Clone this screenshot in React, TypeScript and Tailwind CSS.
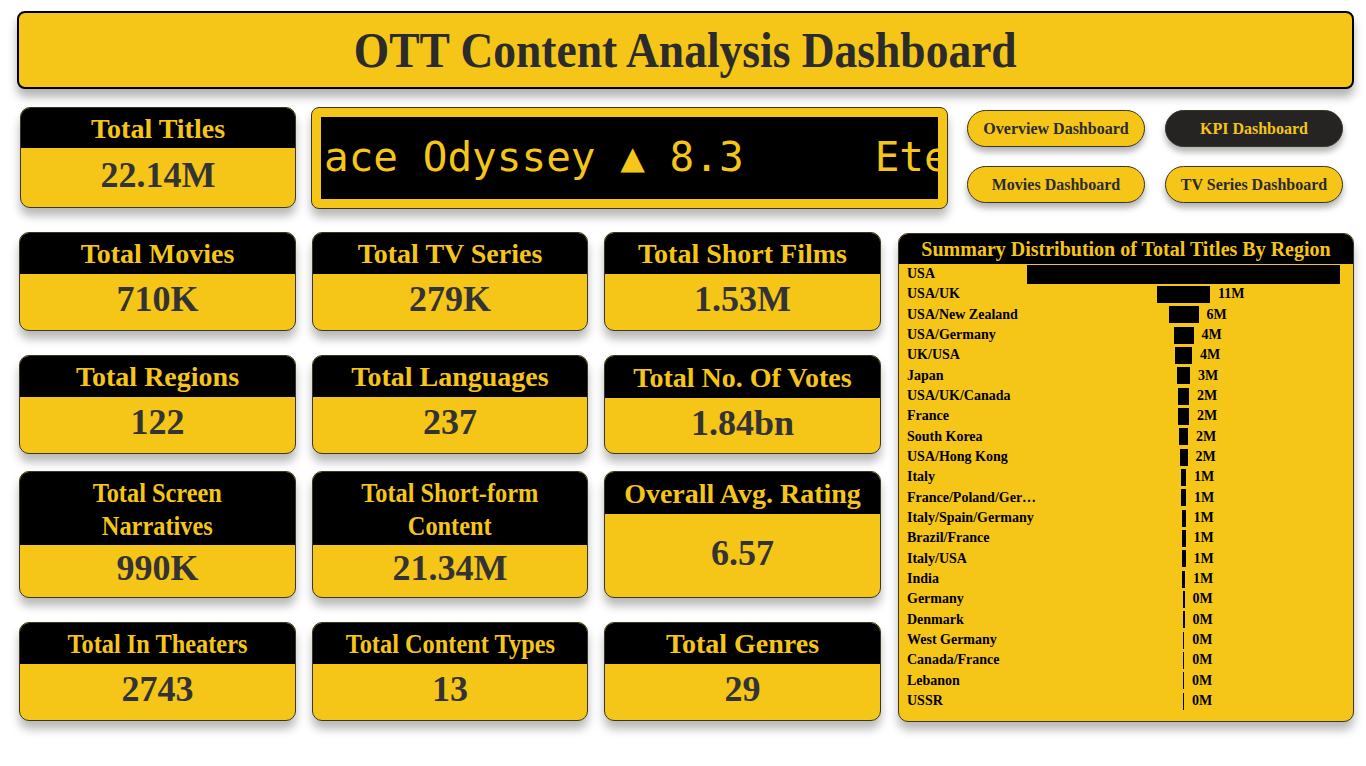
import type { ReactNode } from "react";

const serif = { fontFamily: '"Liberation Serif", "Times New Roman", serif' };

const regions: [string, number, string][] = [
	["USA", 313, ""],
	["USA/UK", 53, "11M"],
	["USA/New Zealand", 30, "6M"],
	["USA/Germany", 20, "4M"],
	["UK/USA", 17, "4M"],
	["Japan", 13, "3M"],
	["USA/UK/Canada", 11, "2M"],
	["France", 11, "2M"],
	["South Korea", 9, "2M"],
	["USA/Hong Kong", 8, "2M"],
	["Italy", 5, "1M"],
	["France/Poland/Germany", 5, "1M"],
	["Italy/Spain/Germany", 4, "1M"],
	["Brazil/France", 4, "1M"],
	["Italy/USA", 4, "1M"],
	["India", 3, "1M"],
	["Germany", 2, "0M"],
	["Denmark", 2, "0M"],
	["West Germany", 1.5, "0M"],
	["Canada/France", 1.5, "0M"],
	["Lebanon", 1, "0M"],
	["USSR", 1, "0M"],
];

function Card({
	title,
	value,
	className = "",
	headClass = "h-[41px]",
	condensed = false,
}: {
	title: ReactNode;
	value: string;
	className?: string;
	headClass?: string;
	condensed?: boolean;
}) {
	return (
		<div
			className={`flex flex-col overflow-hidden rounded-[10px] border border-[#3b3626] bg-[#F5C518] shadow-[0_8px_10px_rgba(0,0,0,0.28)] ${className}`}
		>
			<div className={`flex shrink-0 items-center justify-center bg-black ${headClass}`}>
				<div
					className={`text-center text-[28px] font-bold leading-[33px] text-[#F5C518] ${condensed ? "scale-x-[0.87]" : ""}`}
				>
					{title}
				</div>
			</div>
			<div className="flex flex-1 items-center justify-center pb-[6px] text-[36px] font-bold leading-none text-[#333333]">
				{value}
			</div>
		</div>
	);
}

function NavButton({ label, active = false }: { label: string; active?: boolean }) {
	return (
		<button
			type="button"
			className={`flex h-[37px] w-[178px] items-center justify-center rounded-full border border-[#3b3626] text-[16px] font-bold leading-none shadow-[0_5px_6px_rgba(0,0,0,0.3)] ${
				active ? "bg-[#252423] text-[#F5C518]" : "bg-[#F5C518] text-[#2b2b2b]"
			}`}
		>
			{label}
		</button>
	);
}

function RegionChart() {
	return (
		<div className="flex h-[489px] w-[456px] flex-col overflow-hidden rounded-[10px] border border-[#3b3626] bg-[#F5C518] shadow-[0_8px_10px_rgba(0,0,0,0.28)]">
			<div className="flex h-[30px] shrink-0 items-center justify-center bg-black text-[20px] font-bold text-[#F5C518]">
				Summary Distribution of Total Titles By Region
			</div>
			<div className="flex flex-col">
				{regions.map(([name, width, label]) => (
					<div key={name} className="grid h-[20.33px] grid-cols-[120px_313px] items-center pl-[8px]">
						<div className="w-[134px] truncate text-[14px] font-bold leading-none text-black">
							{name}
						</div>
						<div className="grid grid-cols-[1fr_auto_1fr] items-center">
							<div />
							<div
								className={`bg-black ${name === "USA" ? "h-[19px]" : "h-[17px]"}`}
								style={{ width: `${width}px` }}
							/>
							<div className="whitespace-nowrap pl-[8px] text-[14px] font-bold leading-none text-black">
								{label}
							</div>
						</div>
					</div>
				))}
			</div>
		</div>
	);
}

function App() {
	return (
		<div className="h-[766px] w-[1366px] overflow-hidden bg-white" style={serif}>
			<header className="ml-[17px] mt-[11px] flex h-[78px] w-[1337px] items-center justify-center rounded-[8px] border-2 border-black bg-[#F5C518] shadow-[0_8px_10px_rgba(0,0,0,0.3)]">
				<h1 className="scale-x-[0.91] text-[50px] font-bold leading-none text-[#2b2b2b]">
					OTT Content Analysis Dashboard
				</h1>
			</header>

			<div className="ml-[20px] mt-[18px] flex items-start">
				<Card title="Total Titles" value="22.14M" className="h-[101px] w-[276px]" headClass="h-[40px]" />
				<div className="ml-[15px] h-[102px] w-[637px] rounded-[8px] border border-[#3b3626] bg-[#F5C518] p-[9px] shadow-[0_8px_10px_rgba(0,0,0,0.28)]">
					<div
						className="flex h-full items-center overflow-hidden whitespace-pre bg-black pb-[2px] pl-[3px] text-[41px] leading-none text-[#F5C518]"
						style={{ fontFamily: '"DejaVu Sans Mono", monospace' }}
					>
						<span className="shrink-0">ace Odyssey ▲ 8.3</span>
						<span className="w-[131px] shrink-0" />
						<span className="shrink-0">Eternal Sunshine ▲ 8.3</span>
					</div>
				</div>
				<div className="ml-[19px] mt-[3px] grid grid-cols-[178px_178px] gap-x-[20px] gap-y-[19px]">
					<NavButton label="Overview Dashboard" />
					<NavButton label="KPI Dashboard" active />
					<NavButton label="Movies Dashboard" />
					<NavButton label="TV Series Dashboard" />
				</div>
			</div>

			<div className="ml-[19px] mt-[23px] flex items-start">
				<div className="flex w-[862px] flex-col">
					<div className="grid grid-cols-[277px_276px_277px] gap-x-[16px]">
						<Card title="Total Movies" value="710K" className="h-[99px]" />
						<Card title="Total TV Series" value="279K" className="h-[99px]" />
						<Card title="Total Short Films" value="1.53M" className="h-[99px]" />
					</div>
					<div className="mt-[24px] grid grid-cols-[277px_276px_277px] gap-x-[16px]">
						<Card title="Total Regions" value="122" className="h-[99px]" />
						<Card title="Total Languages" value="237" className="h-[99px]" />
						<Card title="Total No. Of Votes" value="1.84bn" className="h-[99px]" headClass="h-[42px]" />
					</div>
					<div className="mt-[17px] grid grid-cols-[277px_276px_277px] gap-x-[16px]">
						<Card
							title={
								<>
									Total Screen
									<br />
									Narratives
								</>
							}
							value="990K"
							className="h-[127px]"
							headClass="h-[73px]"
							condensed
						/>
						<Card
							title={
								<>
									Total Short-form
									<br />
									Content
								</>
							}
							value="21.34M"
							className="h-[127px]"
							headClass="h-[73px]"
							condensed
						/>
						<Card title="Overall Avg. Rating" value="6.57" className="h-[127px]" headClass="h-[42px]" />
					</div>
					<div className="mt-[24px] grid grid-cols-[277px_276px_277px] gap-x-[16px]">
						<Card title="Total In Theaters" value="2743" className="h-[99px]" condensed />
						<Card title="Total Content Types" value="13" className="h-[99px]" condensed />
						<Card title="Total Genres" value="29" className="h-[99px]" />
					</div>
				</div>
				<div className="ml-[17px] mt-[1px]">
					<RegionChart />
				</div>
			</div>
		</div>
	);
}

export default App;
